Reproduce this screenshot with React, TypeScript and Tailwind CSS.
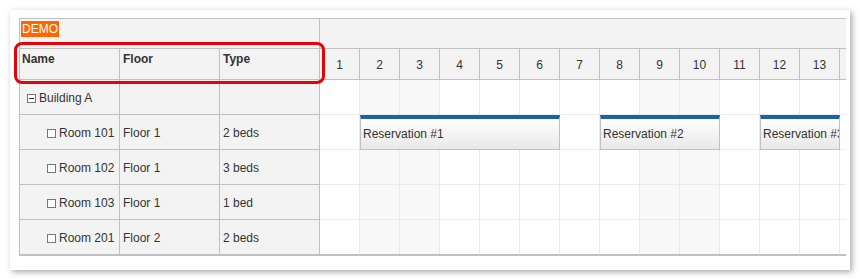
import React from 'react';

// Scheduler demo: rooms grouped by building, one column per day.

type Row = {
    name: string;
    floor?: string;
    type?: string;
    parent?: boolean;
};

type Reservation = {
    text: string;
    row: number;
    start: number; // day number, 1-based
    days: number;
};

const rows: Row[] = [
    { name: 'Building A', parent: true },
    { name: 'Room 101', floor: 'Floor 1', type: '2 beds' },
    { name: 'Room 102', floor: 'Floor 1', type: '3 beds' },
    { name: 'Room 103', floor: 'Floor 1', type: '1 bed' },
    { name: 'Room 201', floor: 'Floor 2', type: '2 beds' },
];

const reservations: Reservation[] = [
    { text: 'Reservation #1', row: 1, start: 2, days: 5 },
    { text: 'Reservation #2', row: 1, start: 8, days: 3 },
    { text: 'Reservation #3', row: 1, start: 12, days: 2 },
];

const days = Array.from({ length: 14 }, (_, i) => i + 1);
const visibleLabels = 13; // the 14th column only peeks in at the right edge
const weekend = [2, 3, 9, 10];
const cellWidth = 40;

const TreeIcon: React.FC<{ expanded?: boolean }> = ({ expanded }) => (
    <span className="relative inline-block w-[9px] h-[9px] border border-[#777] bg-white shrink-0">
        {expanded && <span className="absolute left-[1px] top-[3px] w-[5px] h-px bg-[#333]" />}
    </span>
);

const App: React.FC = () => {
    return (
        <div
            className="w-[860px] h-[280px] bg-white pt-[10px] pl-[10px] text-[12px] text-[#333]"
            style={{ fontFamily: '"Liberation Sans", Arial, sans-serif' }}
        >
            <div className="relative w-[840px] h-[260px] bg-white pt-[8px] pl-[9px] shadow-[2px_2px_6px_rgba(0,0,0,0.35)]">
                <div className="flex w-[827px] border-t border-l border-b-2 border-[#c0c0c0]">
                    {/* row headers */}
                    <div className="w-[300px] shrink-0 border-r border-[#c0c0c0] bg-[#f3f3f3]">
                        <div className="h-[30px] border-b border-[#c0c0c0] pt-px pl-px">
                            <span className="inline-block bg-[#ff6600] text-white px-px leading-[16px]">DEMO</span>
                        </div>
                        <div className="flex h-[31px] border-b border-[#c0c0c0] font-bold">
                            <div className="w-[100px] border-r border-[#c0c0c0] pl-[2px] pt-[3px] leading-[15px]">Name</div>
                            <div className="w-[100px] border-r border-[#c0c0c0] pl-[3px] pt-[3px] leading-[15px]">Floor</div>
                            <div className="w-[99px] pl-[3px] pt-[3px] leading-[15px]">Type</div>
                        </div>
                        {rows.map((r, i) => (
                            <div
                                key={r.name}
                                className={
                                    i === rows.length - 1
                                        ? 'flex h-[34px]'
                                        : 'flex h-[35px] border-b border-[#c0c0c0]'
                                }
                            >
                                <div
                                    className={
                                        r.parent
                                            ? 'w-[100px] border-r border-[#c0c0c0] flex items-center gap-[3px] pl-[7px] pt-[2px] whitespace-nowrap'
                                            : 'w-[100px] border-r border-[#c0c0c0] flex items-center gap-[3px] pl-[27px] pt-[2px] whitespace-nowrap'
                                    }
                                >
                                    <TreeIcon expanded={r.parent} />
                                    <span>{r.name}</span>
                                </div>
                                <div className="w-[100px] border-r border-[#c0c0c0] flex items-center pl-[3px] pt-[2px]">
                                    {r.floor}
                                </div>
                                <div className="w-[99px] flex items-center pl-[3px] pt-[2px]">{r.type}</div>
                            </div>
                        ))}
                    </div>

                    {/* timeline */}
                    <div className="w-[526px] shrink-0 overflow-hidden">
                        <div className="w-[560px]">
                            <div className="h-[30px] border-b border-[#c0c0c0] bg-[#f3f3f3]" />
                            <div className="flex h-[31px] border-b border-[#c0c0c0] bg-[#f3f3f3]">
                                {days.map((d) => (
                                    <div
                                        key={d}
                                        className="w-[40px] shrink-0 border-r border-[#c0c0c0] flex items-center justify-center pt-px"
                                    >
                                        {d <= visibleLabels ? d : null}
                                    </div>
                                ))}
                            </div>
                            {rows.map((r, i) => (
                                <div
                                    key={r.name}
                                    className={
                                        i === rows.length - 1
                                            ? 'relative flex h-[34px]'
                                            : 'relative flex h-[35px] border-b border-[#eaeaea]'
                                    }
                                >
                                    {days.map((d) => (
                                        <div
                                            key={d}
                                            className={
                                                weekend.includes(d)
                                                    ? 'w-[40px] shrink-0 border-r border-[#eaeaea] bg-[#f8f8f8]'
                                                    : 'w-[40px] shrink-0 border-r border-[#eaeaea] bg-white'
                                            }
                                        />
                                    ))}
                                    {reservations
                                        .filter((e) => e.row === i)
                                        .map((e) => (
                                            <div
                                                key={e.text}
                                                className="absolute top-0 h-[35px] border border-[#c0c0c0] border-t-[4px] border-t-[#1862a8] bg-linear-to-b from-white to-[#e8e8e8] flex items-center pl-[2px] pb-px overflow-hidden whitespace-nowrap"
                                                style={{
                                                    left: (e.start - 1) * cellWidth,
                                                    width: e.days * cellWidth,
                                                }}
                                            >
                                                {e.text}
                                            </div>
                                        ))}
                                </div>
                            ))}
                        </div>
                    </div>
                </div>

                {/* highlight around the column headers */}
                <div className="absolute left-[4px] top-[32px] w-[311px] h-[42px] border-[3px] border-[#e8000b] rounded-[8px] pointer-events-none" />
            </div>
        </div>
    );
};

export default App;
